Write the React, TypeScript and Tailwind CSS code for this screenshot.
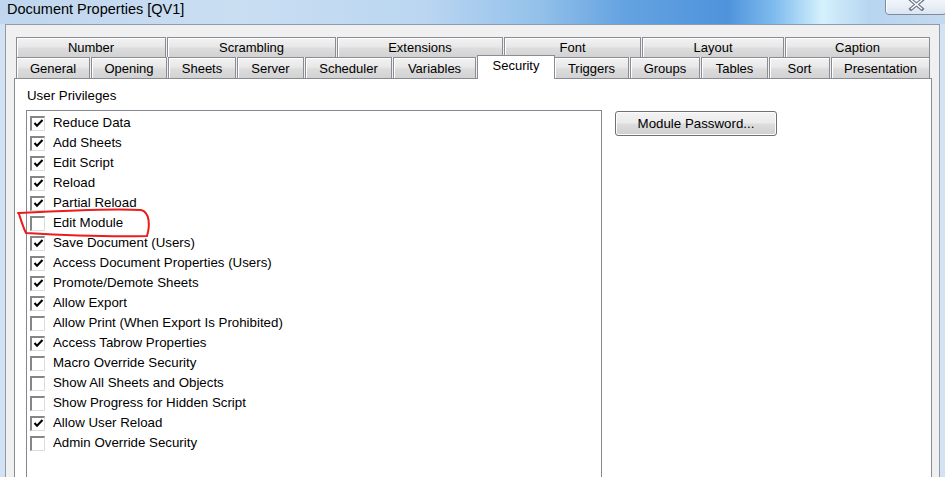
import React from 'react';

const row1: [string, number][] = [
  ['Number', 150],
  ['Scrambling', 169],
  ['Extensions', 166],
  ['Font', 137],
  ['Layout', 142],
  ['Caption', 145],
];

const row2: [string, number][] = [
  ['General', 74],
  ['Opening', 76],
  ['Sheets', 68],
  ['Server', 67],
  ['Scheduler', 87],
  ['Variables', 83],
  ['Security', 76],
  ['Triggers', 75],
  ['Groups', 70],
  ['Tables', 67],
  ['Sort', 61],
  ['Presentation', 99],
];

const items: [string, boolean][] = [
  ['Reduce Data', true],
  ['Add Sheets', true],
  ['Edit Script', true],
  ['Reload', true],
  ['Partial Reload', true],
  ['Edit Module', false],
  ['Save Document (Users)', true],
  ['Access Document Properties (Users)', true],
  ['Promote/Demote Sheets', true],
  ['Allow Export', true],
  ['Allow Print (When Export Is Prohibited)', false],
  ['Access Tabrow Properties', true],
  ['Macro Override Security', false],
  ['Show All Sheets and Objects', false],
  ['Show Progress for Hidden Script', false],
  ['Allow User Reload', true],
  ['Admin Override Security', false],
];

function Tab({ label, width, h }: { label: string; width: number; h: string }) {
  return (
    <div
      className={`${h} shrink-0 border-t border-l border-r border-[#898c95] bg-[linear-gradient(to_bottom,#f2f2f2,#e8e8e8_45%,#dcdcdc_55%,#d2d2d2)] shadow-[inset_1px_1px_0_#ffffff] flex items-center justify-center text-[13px] leading-[16px] text-black`}
      style={{ width }}
    >
      {label}
    </div>
  );
}

function Box({ checked }: { checked: boolean }) {
  return (
    <div className="w-[15px] h-[15px] shrink-0 bg-white border-t-2 border-l-2 border-t-[#868686] border-l-[#868686] border-r border-b border-r-[#dcdcdc] border-b-[#dcdcdc] flex items-center justify-center">
      {checked && (
        <svg width="11" height="11" viewBox="0 0 11 11">
          <path d="M1.5 5 L4 7.8 L9.5 2" stroke="#000" strokeWidth="2" fill="none" />
        </svg>
      )}
    </div>
  );
}

export default function App() {
  return (
    <div className="relative w-[945px] h-[477px] overflow-hidden bg-[#d3e2f2] [font-family:'Liberation_Sans',Arial,sans-serif]">
      {/* title bar */}
      <div className="h-[24px] bg-[linear-gradient(90deg,#c0d6ee_0%,#cadef2_25%,#bad6f1_45%,#93c1ea_57%,#64a3e1_66%,#4f93dc_77%,#7fbcee_82%,#d4f1fd_87%,#b7d5f0_92%,#c4d9ef_100%)] pl-[7px] pt-[1px]">
        <div className="text-[14.5px] leading-[16px] text-black">Document Properties [QV1]</div>
      </div>

      {/* close button */}
      <div className="absolute left-[885px] top-[-1px] w-[62px] h-[16px] rounded-b-[4px] border border-[#7d8b9d] bg-[linear-gradient(to_bottom,#f2f6fb,#dbe5f0)] shadow-[inset_1px_0_0_#ffffff] flex justify-center">
        <svg width="17" height="11" viewBox="0 0 17 11">
          <path d="M3 0 L14 9 M14 0 L3 9" stroke="#6f7b89" strokeWidth="3.6" strokeLinecap="square" />
          <path d="M3 0 L14 9 M14 0 L3 9" stroke="#ffffff" strokeWidth="1.4" />
        </svg>
      </div>

      {/* client area */}
      <div className="ml-[5px] w-[935px] h-[460px] border border-[#8f9aab] bg-[#f0f0f0] pl-[8px] pr-[7px] pt-[12px]">
        {/* tab rows */}
        <div className="pl-[2px] flex flex-col">
          <div className="flex gap-[1px]">
            {row1.map(([l, w]) => (
              <Tab key={l} label={l} width={w} h="h-[20px]" />
            ))}
          </div>
          <div className="flex gap-[1px] items-start">
            {row2.map(([l, w]) =>
              l === 'Security' ? (
                <div
                  key={l}
                  className="relative z-10 w-[78px] -mr-[2px] h-[24px] -mt-[2px] -mb-[1px] shrink-0 border-t border-l border-r border-[#898c95] bg-white flex items-center justify-center pb-[3px] text-[13px] leading-[16px] text-black"
                >
                  {l}
                </div>
              ) : (
                <Tab key={l} label={l} width={w} h="h-[21px] pt-[2px]" />
              )
            )}
          </div>
        </div>

        {/* panel */}
        <div className="h-[400px] border border-[#898c95] bg-white pl-[11px] pt-[9px]">
          <div className="ml-[1px] text-[13.3px] leading-[16px] text-black">User Privileges</div>
          <div className="mt-[6px] flex items-start">
            <div className="w-[576px] h-[380px] border border-[#828790] bg-white pt-[2px] pl-[3px]">
              {items.map(([label, checked]) => (
                <div key={label} className="h-[20px] flex items-center">
                  <Box checked={checked} />
                  <span className="ml-[8px] text-[13.3px] leading-[20px] text-black whitespace-nowrap">{label}</span>
                </div>
              ))}
            </div>
            <button className="ml-[13px] mt-[1px] w-[162px] h-[25px] pt-[1px] rounded-[3px] border border-[#707070] bg-[linear-gradient(to_bottom,#f3f3f3,#ebebeb_48%,#dddddd_52%,#cfcfcf)] shadow-[inset_0_0_0_1px_#fcfcfc] text-[13.3px] leading-[16px] text-black flex items-center justify-center">
              Module Password...
            </button>
          </div>
        </div>
      </div>

      {/* red annotation */}
      <svg className="absolute left-0 top-0 pointer-events-none" width="945" height="477">
        <path
          d="M18 213 C 55 211, 110 208, 141 210 C 150 212, 150 226, 147 236 C 110 237, 60 235, 26 233 C 23 227, 21 220, 19 214"
          stroke="#ec1c1c"
          strokeWidth="2"
          fill="none"
          strokeLinecap="round"
        />
      </svg>
    </div>
  );
}
